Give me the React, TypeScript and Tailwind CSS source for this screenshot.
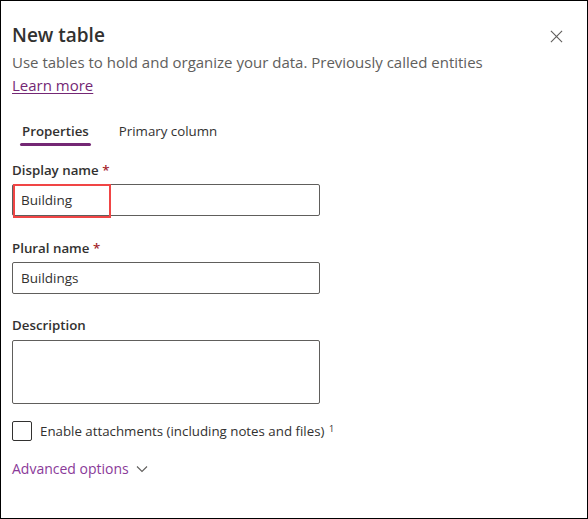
import React from "react";

export default function App() {
  const font = { fontFamily: '"Open Sans", "Noto Sans", sans-serif' };
  return (
    <div
      className="w-[588px] h-[519px] bg-white border border-black text-[#323130] relative box-border"
      style={font}
    >
      <div className="pl-[11px] pr-[11px]">
        <div className="flex items-start justify-between pt-[20px]">
          <h1 className="text-[19px] leading-[28px] font-semibold">New table</h1>
          <button className="mt-[8px] mr-[13px] w-[14px] h-[14px] flex items-center justify-center text-[#605e5c]">
            <svg width="13" height="13" viewBox="0 0 14 14" fill="none">
              <path d="M1 1L13 13M13 1L1 13" stroke="currentColor" strokeWidth="1.2" />
            </svg>
          </button>
        </div>
        <p className="text-[15px] leading-[22px] text-[#605e5c] mt-[2px]">
          Use tables to hold and organize your data. Previously called entities
        </p>
        <a className="text-[15px] leading-[22px] text-[#742774] underline underline-offset-2 inline-block">
          Learn more
        </a>

        <div className="flex gap-[30px] mt-[21px] pl-[10px]">
          <div className="relative pb-[4px]">
            <span className="text-[13.3px] leading-[20px] font-semibold">Properties</span>
            <div className="absolute left-[-2px] right-[-2px] bottom-0 h-[3px] bg-[#742774] rounded-sm" />
          </div>
          <div className="pb-[4px]">
            <span className="text-[13.3px] leading-[20px]">Primary column</span>
          </div>
        </div>

        <div className="mt-[14px] flex flex-col">
          <label className="text-[13.3px] leading-[20px] font-semibold">
            Display name <span className="text-[#a4262c]">*</span>
          </label>
          <div className="mt-[4px] w-[308px] h-[32px] border border-[#605e5c] rounded-[2px] relative flex items-center px-[8px] text-[13.5px]">
            Building
            <div className="absolute left-[0px] top-[-1px] w-[98px] h-[34px] border-2 border-[#f04545]" />
          </div>

          <label className="text-[13.3px] leading-[20px] font-semibold mt-[22px]">
            Plural name <span className="text-[#a4262c]">*</span>
          </label>
          <div className="mt-[4px] w-[308px] h-[32px] border border-[#605e5c] rounded-[2px] flex items-center px-[8px] text-[13.5px]">
            Buildings
          </div>

          <label className="text-[13.3px] leading-[20px] font-semibold mt-[21px]">Description</label>
          <div className="mt-[5px] w-[308px] h-[64px] border border-[#605e5c] rounded-[2px]" />

          <div className="mt-[17px] flex items-center gap-[8px]">
            <div className="w-[20px] h-[20px] border border-[#323130] rounded-[2px]" />
            <span className="text-[13.3px] leading-[20px] text-[#323130]">
              Enable attachments (including notes and files) <sup className="text-[9px] ml-[1px]">1</sup>
            </span>
          </div>

          <div className="mt-[18px] flex items-center gap-[7px] text-[#8a3a99]">
            <span className="text-[14px] leading-[20px]">Advanced options</span>
            <svg width="12" height="8" viewBox="0 0 12 8" fill="none">
              <path d="M1 1.5L6 6.5L11 1.5" stroke="#605e5c" strokeWidth="1.1" />
            </svg>
          </div>
        </div>
      </div>
    </div>
  );
}
